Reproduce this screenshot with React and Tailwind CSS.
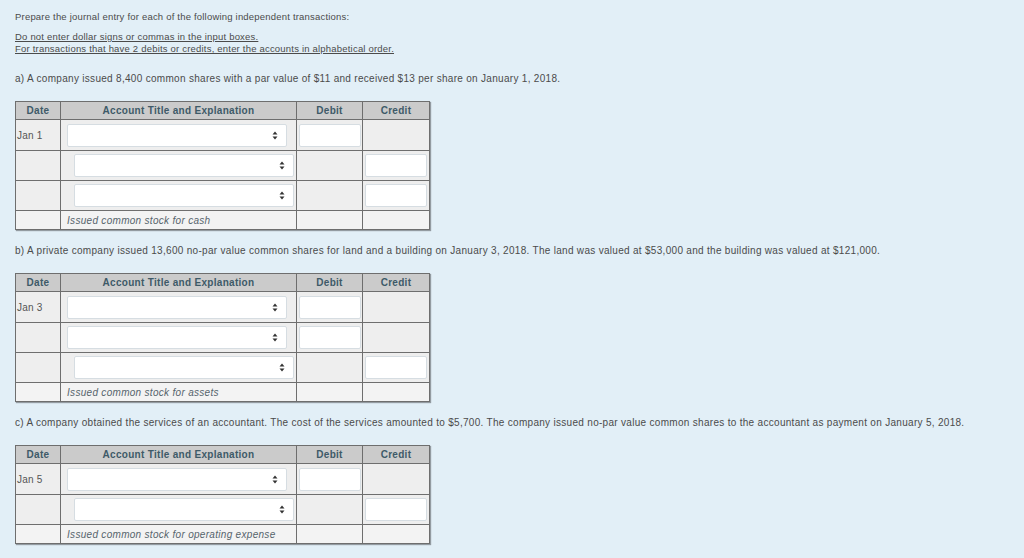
import React from 'react';

const font = { fontFamily: '"Liberation Sans", Arial, sans-serif' };

const entries = [
  {
    label: 'a) A company issued 8,400 common shares with a par value of $11 and received $13 per share on January 1, 2018.',
    date: 'Jan 1',
    credits: 2,
    note: 'Issued common stock for cash',
  },
  {
    label: 'b) A private company issued 13,600 no-par value common shares for land and a building on January 3, 2018. The land was valued at $53,000 and the building was valued at $121,000.',
    date: 'Jan 3',
    debits: 2,
    credits: 1,
    note: 'Issued common stock for assets',
  },
  {
    label: 'c) A company obtained the services of an accountant. The cost of the services amounted to $5,700. The company issued no-par value common shares to the accountant as payment on January 5, 2018.',
    date: 'Jan 5',
    credits: 1,
    note: 'Issued common stock for operating expense',
  },
];

function SelectBox({ indent }) {
  return (
    <div className={`h-[23px] w-[220px] bg-white border border-[#d6dde2] rounded-[2px] flex items-center justify-end pr-[8px] ${indent ? 'ml-[13px]' : 'ml-[6px]'}`}>
      <svg width="6" height="9" viewBox="0 0 6 9">
        <path d="M3 0.5 L5.5 3.5 L0.5 3.5 Z" fill="#333" />
        <path d="M3 8.5 L5.5 5.5 L0.5 5.5 Z" fill="#333" />
      </svg>
    </div>
  );
}

function TextBox() {
  return <div className="ml-[2px] h-[23px] w-[62px] bg-white border border-[#d6dde2] rounded-[2px]" />;
}

function Journal({ entry }) {
  // debit lines first, then the indented credit lines
  const rows = [];
  const debits = entry.debits || 1;
  for (let i = 0; i < debits; i++) rows.push('debit');
  for (let i = 0; i < entry.credits; i++) rows.push('credit');

  return (
    <table className="border-collapse table-fixed w-[414px] shadow-[1px_1px_1px_rgba(0,0,0,0.35)]">
      <colgroup>
        <col className="w-[45px]" />
        <col className="w-[236px]" />
        <col className="w-[66px]" />
        <col className="w-[67px]" />
      </colgroup>
      <thead>
        <tr className="h-[18px] bg-[#cbcbcb] text-[#3e5a68] text-[10px] tracking-[0.3px]">
          <th className="border border-[#6e6e6e] font-bold">Date</th>
          <th className="border border-[#6e6e6e] font-bold">Account Title and Explanation</th>
          <th className="border border-[#6e6e6e] font-bold">Debit</th>
          <th className="border border-[#6e6e6e] font-bold">Credit</th>
        </tr>
      </thead>
      <tbody>
        {rows.map((kind, i) => (
          <tr key={i} className={`bg-[#eeeeee] ${i === 0 ? 'h-[31px]' : 'h-[30px]'}`}>
            <td className="border border-[#6e6e6e] text-[10px] tracking-[0.2px] text-[#555] pl-[1px] align-middle">
              {i === 0 ? entry.date : ''}
            </td>
            <td className="border border-[#6e6e6e] align-middle">
              <SelectBox indent={kind === 'credit'} />
            </td>
            <td className="border border-[#6e6e6e] align-middle">
              {kind === 'debit' ? <TextBox /> : null}
            </td>
            <td className="border border-[#6e6e6e] align-middle">
              {kind === 'credit' ? <TextBox /> : null}
            </td>
          </tr>
        ))}
        <tr className="h-[19px] bg-[#f3f3f3]">
          <td className="border border-[#6e6e6e]" />
          <td className="border border-[#6e6e6e] pl-[6px] text-[10px] tracking-[0.3px] italic text-[#56646c]">{entry.note}</td>
          <td className="border border-[#6e6e6e]" />
          <td className="border border-[#6e6e6e]" />
        </tr>
      </tbody>
    </table>
  );
}

export default function App() {
  return (
    <div className="w-[1024px] h-[558px] bg-[#e2eff7] overflow-hidden px-[15px] pt-[10px] text-[#4b4b4b]" style={font}>
      <p className="text-[9.5px] leading-[13px] tracking-[0.2px]">
        Prepare the journal entry for each of the following independent transactions:
      </p>
      <p className="mt-[8px] text-[9.5px] leading-[12px] tracking-[0.2px] underline">
        Do not enter dollar signs or commas in the input boxes.
      </p>
      <p className="text-[9.5px] leading-[12px] tracking-[0.2px] underline">
        For transactions that have 2 debits or credits, enter the accounts in alphabetical order.
      </p>

      {entries.map((entry, idx) => (
        <div key={idx}>
          <p className={`text-[10px] leading-[13px] tracking-[0.3px] mb-[16px] ${idx === 0 ? 'mt-[17px]' : 'mt-[14px]'}`}>
            {entry.label}
          </p>
          <Journal entry={entry} />
        </div>
      ))}
    </div>
  );
}
